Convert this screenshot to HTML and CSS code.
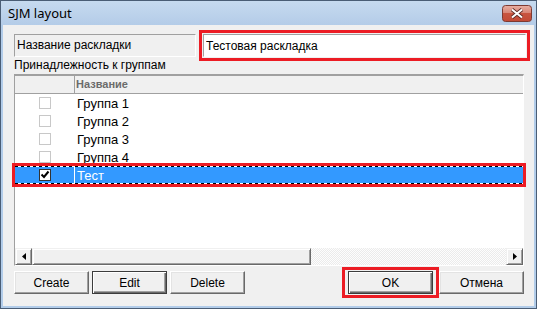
FILE: index.html
```html
<!DOCTYPE html>
<html>

<head>
    <title>SJM layout</title>
    <meta charset="utf-8">
    <link rel="stylesheet" href="styles.css">
</head>

<body>
    <div class="window">
        <div class="titlebar">
            <span class="title">SJM layout</span>
            <span class="close-btn">
                <svg width="30" height="17" viewBox="0 0 30 17">
                    <defs>
                        <linearGradient id="close-grad" x1="0" y1="0" x2="0" y2="1">
                            <stop offset="0" stop-color="#e8b0a4" />
                            <stop offset="0.45" stop-color="#d98676" />
                            <stop offset="0.5" stop-color="#c8543f" />
                            <stop offset="1" stop-color="#c24a36" />
                        </linearGradient>
                    </defs>
                    <rect x="0.5" y="0.5" width="29" height="16" rx="3" fill="url(#close-grad)" stroke="#7d3a32" />
                    <path d="M10 4.5 L20 12.5 M20 4.5 L10 12.5" stroke="#5b2b27" stroke-width="3.6" />
                    <path d="M10 4.5 L20 12.5 M20 4.5 L10 12.5" stroke="#fff" stroke-width="2" />
                </svg>
            </span>
        </div>
        <div class="client">
            <div class="name-row">
                <div class="name-label">Название раскладки</div>
                <input class="name-input" type="text" value="Тестовая раскладка">
            </div>
            <div class="group-caption">Принадлежность к группам</div>
            <div class="grid">
                <div class="grid-head">
                    <div class="col-check"></div>
                    <div class="col-name">Название</div>
                </div>
                <div class="grid-body">
                    <div class="grid-row">
                        <div class="col-check"><span class="check"></span></div>
                        <div class="col-name">Группа 1</div>
                    </div>
                    <div class="grid-row">
                        <div class="col-check"><span class="check"></span></div>
                        <div class="col-name">Группа 2</div>
                    </div>
                    <div class="grid-row">
                        <div class="col-check"><span class="check"></span></div>
                        <div class="col-name">Группа 3</div>
                    </div>
                    <div class="grid-row">
                        <div class="col-check"><span class="check"></span></div>
                        <div class="col-name">Группа 4</div>
                    </div>
                    <div class="grid-row selected">
                        <div class="col-check">
                            <span class="check checked">
                                <svg width="10" height="10" viewBox="0 0 10 10">
                                    <path d="M1.5 4.5 L4 7 L8.5 1.5" fill="none" stroke="#000" stroke-width="2" />
                                </svg>
                            </span>
                        </div>
                        <div class="col-name">Тест</div>
                    </div>
                </div>
                <div class="hscroll">
                    <div class="scroll-btn">
                        <svg width="4" height="7" viewBox="0 0 4 7"><path d="M4 0 L0 3.5 L4 7 Z" fill="#000" /></svg>
                    </div>
                    <div class="scroll-thumb"></div>
                    <div class="scroll-track"></div>
                    <div class="scroll-btn">
                        <svg width="4" height="7" viewBox="0 0 4 7"><path d="M0 0 L4 3.5 L0 7 Z" fill="#000" /></svg>
                    </div>
                </div>
            </div>
            <div class="button-row">
                <button class="btn">Create</button>
                <button class="btn default">Edit</button>
                <button class="btn">Delete</button>
                <span class="mark"><button class="btn wide default">OK</button></span>
                <button class="btn wide">Отмена</button>
            </div>
        </div>
    </div>
</body>

</html>
```

FILE: styles.css
```css
body {
    margin: 0;
}

.window {
    display: flex;
    flex-direction: column;
    width: 537px;
    height: 309px;
    box-sizing: border-box;
    border: 1px solid #4a5d75;
    padding: 0 2px 2px;
    background: #b2cce9;
    font-family: "Liberation Sans", Arial, sans-serif;
}

.titlebar {
    display: flex;
    align-items: flex-start;
    height: 24px;
    margin: 0 -2px;
    padding: 0 4px 0 7px;
    background: linear-gradient(#c6daef, #b4cce8);
}

.title {
    font-family: "Noto Sans", sans-serif;
    font-size: 13px;
    line-height: 24px;
    color: #000;
}

.close-btn {
    display: block;
    margin-left: auto;
    margin-top: 4px;
    height: 17px;
}

.client {
    flex: 1;
    display: flex;
    flex-direction: column;
    padding: 9px 10px 0 11px;
    background: #f0f0f0;
}

.name-row {
    display: flex;
    height: 23px;
}

.name-label {
    flex-shrink: 0;
    width: 182px;
    box-sizing: border-box;
    border: 1px solid;
    border-color: #a0a0a0 #fff #fff #a0a0a0;
    padding-left: 2px;
    font-size: 12px;
    line-height: 21px;
}

.name-input {
    flex-shrink: 0;
    width: 323px;
    height: 23px;
    box-sizing: border-box;
    margin: 0 0 0 7px;
    padding: 0 2px;
    border: 1px solid;
    border-color: #a0a0a0 #fff #fff #a0a0a0;
    font-family: "Liberation Sans", Arial, sans-serif;
    font-size: 12px;
    color: #000;
    outline: 3px solid #ec1c24;
    outline-offset: 1px;
}

.group-caption {
    height: 17px;
    font-size: 12px;
    line-height: 17px;
}

.grid {
    width: 510px;
    box-sizing: border-box;
    border: 1px solid;
    border-top-width: 2px;
    border-color: #a0a0a0 #fff #fff #a0a0a0;
}

.grid-head {
    display: flex;
    height: 18px;
    box-sizing: border-box;
    border-bottom: 1px solid #a0a0a0;
    background: #f0f0f0;
}

.grid-head .col-check {
    width: 59px;
    border-right: 1px solid #a0a0a0;
}

.grid-head .col-name {
    padding-left: 1px;
    font-size: 11px;
    font-weight: bold;
    line-height: 17px;
    color: #6b6b6b;
}

.grid-body {
    height: 154px;
    background: #fff;
}

.grid-row {
    display: flex;
    align-items: center;
    height: 18px;
    font-size: 13px;
}

.grid-row .col-check {
    display: flex;
    align-items: center;
    justify-content: center;
    width: 59px;
    height: 100%;
    border-right: 1px solid transparent;
}

.grid-row .col-name {
    padding-left: 2px;
}

.check {
    display: flex;
    align-items: center;
    justify-content: center;
    width: 12px;
    height: 12px;
    box-sizing: border-box;
    border: 1px solid #c8c8c8;
    background: #fff;
}

.check.checked {
    border-color: #333;
}

.grid-row.selected {
    color: #fff;
    background:
        repeating-linear-gradient(90deg, #000 0 3px, #fff 3px 6px) top / 100% 1px no-repeat,
        repeating-linear-gradient(90deg, #000 0 3px, #fff 3px 6px) bottom / 100% 1px no-repeat,
        #3399ff;
    outline: 3px solid #ec1c24;
}

.grid-row.selected .col-check {
    border-right-color: #fff;
}

.hscroll {
    display: flex;
    height: 17px;
    background: repeating-conic-gradient(#fdfdfd 0 25%, #ebebeb 0 50%) 0 0 / 2px 2px;
}

.scroll-btn,
.scroll-thumb {
    box-sizing: border-box;
    border: 1px solid;
    border-color: #f0f0f0 #696969 #696969 #f0f0f0;
    box-shadow: inset 1px 1px #fff, inset -1px -1px #a0a0a0;
    background: #f0f0f0;
}

.scroll-btn {
    display: flex;
    align-items: center;
    justify-content: center;
    width: 17px;
}

.scroll-thumb {
    width: 279px;
}

.scroll-track {
    flex: 1;
}

.button-row {
    display: flex;
    align-items: center;
    gap: 3px;
    margin-top: 1px;
}

.btn {
    width: 75px;
    height: 23px;
    box-sizing: border-box;
    padding: 0;
    border: 1px solid;
    border-color: #fff #696969 #696969 #fff;
    box-shadow: inset -1px -1px #a0a0a0, inset 1px 1px #e3e3e3;
    background: #f0f0f0;
    font-family: "Liberation Sans", Arial, sans-serif;
    font-size: 12px;
    color: #000;
}

.btn.default {
    border-color: #3c3c3c;
    box-shadow: inset 1px 1px #fff, inset -1px -1px #696969, inset -2px -2px #a0a0a0;
}

.btn.wide {
    width: 85px;
}

.mark {
    display: flex;
    margin-left: auto;
    margin-right: -3px;
    padding: 1px 3px;
    border: 3px solid #ec1c24;
}
```
